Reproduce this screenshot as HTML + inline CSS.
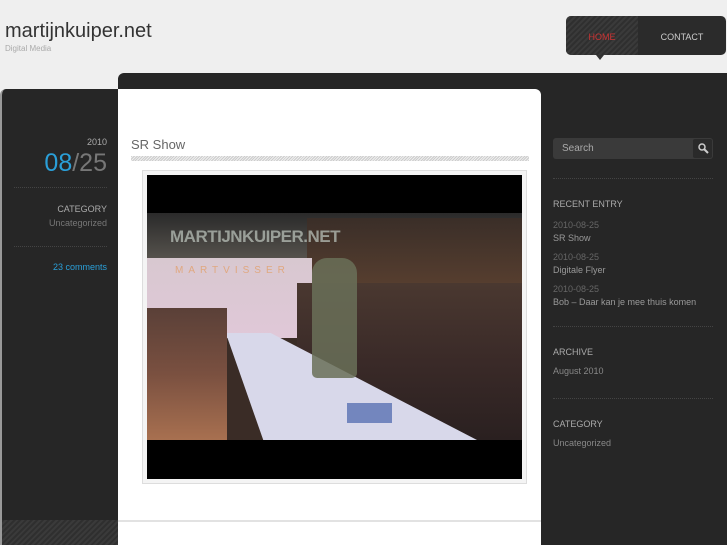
<!DOCTYPE html>
<html><head><meta charset="utf-8"><style>
*{margin:0;padding:0;box-sizing:border-box}
body{width:727px;height:545px;overflow:hidden;background:#efefef;font-family:"Liberation Sans",sans-serif;position:relative}
.abs{position:absolute}
.stripe{background:repeating-linear-gradient(135deg,#2f2f2f 0 2px,#3a3a3a 2px 4px)}
</style></head><body>
<div class="abs" style="left:5px;top:20px;font-size:20px;color:#333">martijnkuiper.net</div>
<div class="abs" style="left:5px;top:44px;font-size:8px;color:#aaa">Digital Media</div>

<div class="abs" style="left:566px;top:16px;width:160px;height:39px;background:#2b2b2b;border-radius:5px;overflow:hidden">
 <div class="abs stripe" style="left:0;top:0;width:72px;height:39px"></div>
 <div class="abs" style="left:0;top:16px;width:72px;text-align:center;font-size:9px;color:#c33">HOME</div>
 <div class="abs" style="left:72px;top:16px;width:88px;text-align:center;font-size:9px;color:#ccc">CONTACT</div>
</div>
<div class="abs" style="left:596px;top:55px;width:0;height:0;border-left:4px solid transparent;border-right:4px solid transparent;border-top:5px solid #333"></div>

<div class="abs" style="left:0;top:89px;width:120px;height:456px;background:#262626;border-radius:6px 0 0 0;border-left:2px solid #999"></div>
<div class="abs stripe" style="left:2px;top:520px;width:116px;height:25px"></div>
<div class="abs" style="left:118px;top:73px;width:609px;height:472px;background:#262626;border-radius:6px 0 0 0"></div>
<div class="abs" style="left:118px;top:89px;width:423px;height:456px;background:#fff;border-radius:0 6px 0 0"></div>
<div class="abs" style="left:118px;top:520px;width:423px;height:2px;background:#e2e2e2"></div>

<div class="abs" style="left:0;top:137px;width:107px;text-align:right;font-size:9px;color:#aaa">2010</div>
<div class="abs" style="left:0;top:149px;width:107px;text-align:right;font-size:25px;color:#777"><span style="color:#2a9fd8">08</span>/25</div>
<div class="abs" style="left:14px;top:187px;width:93px;border-top:1px dotted #444"></div>
<div class="abs" style="left:0;top:204px;width:107px;text-align:right;font-size:9px;color:#aaa">CATEGORY</div>
<div class="abs" style="left:0;top:218px;width:107px;text-align:right;font-size:9px;color:#777">Uncategorized</div>
<div class="abs" style="left:14px;top:246px;width:93px;border-top:1px dotted #444"></div>
<div class="abs" style="left:0;top:262px;width:107px;text-align:right;font-size:9px;color:#2a9fd8">23 comments</div>

<div class="abs" style="left:131px;top:137px;font-size:13px;color:#666">SR Show</div>
<div class="abs" style="left:131px;top:156px;width:398px;height:5px;background:repeating-linear-gradient(135deg,#ccc 0 1px,#eee 1px 2px)"></div>
<div class="abs" style="left:142px;top:170px;width:385px;height:314px;border:1px solid #ddd;background:#f4f4f4"></div>
<div class="abs" style="left:147px;top:175px;width:375px;height:304px;background:#000"></div>
<div class="abs" style="left:147px;top:213px;width:375px;height:227px;overflow:hidden;background:#3a2c26">
 <div class="abs" style="left:0;top:0;width:375px;height:50px;background:linear-gradient(180deg,#2a2a2a,#5a5650)"></div>
 <div class="abs" style="left:160px;top:5px;width:215px;height:75px;background:linear-gradient(180deg,#3a2e28,#5a4030)"></div>
 <div class="abs" style="left:0;top:45px;width:165px;height:80px;background:linear-gradient(180deg,#d8c8d0,#e0c8d8)"></div>
 <div class="abs" style="left:150px;top:70px;width:225px;height:157px;background:linear-gradient(180deg,#4a3830,#3a2a28 50%,#2a2020)"></div>
 <div class="abs" style="left:0;top:120px;width:375px;height:107px;background:#d8d8ea;clip-path:polygon(21% 0,33% 0,88% 100%,31% 100%)"></div>
 <div class="abs" style="left:0;top:95px;width:80px;height:132px;background:linear-gradient(180deg,#5a4038,#7a5040 50%,#a87050)"></div>
 <div class="abs" style="left:165px;top:45px;width:45px;height:120px;background:#6a7058;border-radius:15px 15px 5px 5px;opacity:.85"></div>
 <div class="abs" style="left:200px;top:190px;width:45px;height:20px;background:#3050a0;opacity:.6"></div>
 <div class="abs" style="left:23px;top:14px;font-size:17px;font-weight:bold;color:#b8c0b8;opacity:.75;letter-spacing:-0.5px">MARTIJNKUIPER.NET</div>
 <div class="abs" style="left:28px;top:52px;font-size:10px;letter-spacing:5px;color:#e0a880">MARTVISSER</div>
</div>

<div class="abs" style="left:553px;top:138px;width:160px;height:21px;background:#3a3a3a;border-radius:3px"></div>
<div class="abs" style="left:562px;top:143px;font-size:10px;color:#aaa">Search</div>
<div class="abs" style="left:693px;top:139px;width:19px;height:19px;background:#2a2a2a;border-radius:2px"></div>
<svg class="abs" style="left:697px;top:142px" width="13" height="13"><circle cx="5" cy="5" r="3" stroke="#ccc" stroke-width="1.5" fill="none"/><path d="M7 7L11 11" stroke="#ccc" stroke-width="2"/></svg>
<div class="abs" style="left:553px;top:178px;width:160px;border-top:1px dotted #444"></div>
<div class="abs" style="left:553px;top:200px;font-size:9px;color:#aaa;line-height:1">RECENT ENTRY</div>
<div class="abs" style="left:553px;top:219px;font-size:9px;line-height:13px;color:#666">2010-08-25<br><span style="color:#999">SR Show</span></div>
<div class="abs" style="left:553px;top:251px;font-size:9px;line-height:13px;color:#666">2010-08-25<br><span style="color:#999">Digitale Flyer</span></div>
<div class="abs" style="left:553px;top:283px;font-size:9px;line-height:13px;color:#666">2010-08-25<br><span style="color:#999">Bob – Daar kan je mee thuis komen</span></div>
<div class="abs" style="left:553px;top:326px;width:160px;border-top:1px dotted #444"></div>
<div class="abs" style="left:553px;top:348px;font-size:9px;color:#aaa;line-height:1">ARCHIVE</div>
<div class="abs" style="left:553px;top:367px;font-size:9px;color:#888;line-height:1">August 2010</div>
<div class="abs" style="left:553px;top:398px;width:160px;border-top:1px dotted #444"></div>
<div class="abs" style="left:553px;top:420px;font-size:9px;color:#aaa;line-height:1">CATEGORY</div>
<div class="abs" style="left:553px;top:439px;font-size:9px;color:#888;line-height:1">Uncategorized</div>
</body></html>
